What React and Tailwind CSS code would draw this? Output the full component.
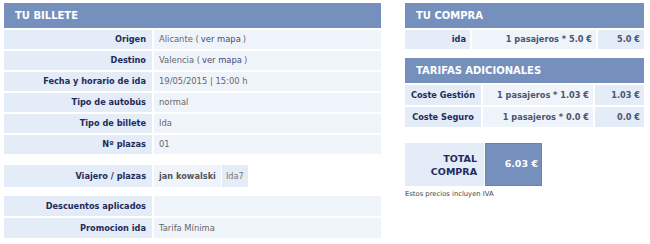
const HEAD = "bg-[#7690bd] text-white font-bold text-[10px] h-[25px] flex items-center pl-[11px]";
const LABEL = "bg-[#e4ecf7] text-[#1f2b5c] font-bold text-[8.2px] flex items-center justify-end pr-[6px]";
const VALUE = "bg-[#eff4fb] text-[#666] text-[8.4px] flex items-center pl-[5px]";

function Row({ label, children, h = "h-[19px]" }) {
  return (
    <div className={`flex gap-[2px] ${h}`}>
      <div className={`${LABEL} w-[148px]`}>{label}</div>
      <div className={`${VALUE} flex-1`}>{children}</div>
    </div>
  );
}

function Mapa({ city }) {
  return (
    <>
      {city}&nbsp;( <span className="text-[#3b4a78] mx-[2px]">ver mapa</span> )
    </>
  );
}

export default function App() {
  return (
    <div
      className="w-[650px] h-[244px] bg-white flex items-start pt-[3px] pl-[4px]"
      style={{ fontFamily: '"DejaVu Sans", Verdana, sans-serif' }}
    >
      {/* tu billete */}
      <div className="w-[377px]">
        <div className={HEAD}>TU BILLETE</div>
        <div className="mt-[2px] flex flex-col gap-[2px]">
          <Row label="Origen"><Mapa city="Alicante" /></Row>
          <Row label="Destino"><Mapa city="Valencia" /></Row>
          <Row label="Fecha y horario de ida">19/05/2015 | 15:00 h</Row>
          <Row label="Tipo de autobús">normal</Row>
          <Row label="Tipo de billete">Ida</Row>
          <Row label="Nº plazas">01</Row>
        </div>

        <div className="mt-[11px] flex gap-[2px] h-[22px]">
          <div className={`${LABEL} w-[148px]`}>Viajero / plazas</div>
          <div className="flex gap-[1px]">
            <div className="bg-[#eff4fb] text-[#555] font-bold text-[8.2px] flex items-center px-[5px]">jan kowalski</div>
            <div className="bg-[#e4ecf7] text-[#777] text-[8.2px] flex items-center px-[4px]">Ida7</div>
          </div>
        </div>

        <div className="mt-[9px] flex flex-col gap-[2px]">
          <Row label="Descuentos aplicados" h="h-[20px]"></Row>
          <Row label="Promocion ida" h="h-[20px]">Tarifa Mínima</Row>
        </div>
      </div>

      {/* derecha */}
      <div className="ml-[24px] w-[239px]">
        <div className={HEAD}>TU COMPRA</div>
        <div className="mt-[2px] flex gap-[2px] h-[19px] text-[8.2px] font-bold">
          <div className="w-[65px] bg-[#e4ecf7] text-[#1f2b5c] flex items-center justify-end pr-[4px]">ida</div>
          <div className="w-[124px] bg-[#eff4fb] text-[#4b5470] flex items-center justify-end pr-[4px]">1 pasajeros * 5.0 €</div>
          <div className="flex-1 bg-[#e4ecf7] text-[#4b5470] flex items-center justify-end pr-[4px]">5.0 €</div>
        </div>

        <div className={`${HEAD} mt-[9px]`}>TARIFAS ADICIONALES</div>
        <div className="mt-[2px] flex flex-col gap-[2px] text-[8.2px] font-bold">
          {[
            ["Coste Gestión", "1 pasajeros * 1.03 €", "1.03 €"],
            ["Coste Seguro", "1 pasajeros * 0.0 €", "0.0 €"],
          ].map(([a, b, c]) => (
            <div key={a} className="flex gap-[2px] h-[20px]">
              <div className="w-[76px] bg-[#e4ecf7] text-[#1f2b5c] flex items-center justify-center">{a}</div>
              <div className="w-[110px] bg-[#eff4fb] text-[#4b5470] flex items-center justify-end pr-[4px]">{b}</div>
              <div className="flex-1 bg-[#e4ecf7] text-[#4b5470] flex items-center justify-end pr-[4px]">{c}</div>
            </div>
          ))}
        </div>

        <div className="mt-[16px] flex gap-[1px] h-[43px]">
          <div className="w-[79px] bg-[#e4ecf7] text-[#1f2b5c] font-bold text-[9.5px] leading-[13px] flex flex-col items-end justify-center pr-[7px]">
            <span>TOTAL</span>
            <span>COMPRA</span>
          </div>
          <div className="w-[57px] bg-[#7690bd] border border-[#6a82ae] text-white font-bold text-[9.5px] flex items-center justify-end pr-[3px]">
            6.03 €
          </div>
        </div>
        <div className="mt-[3px] text-[6.8px] text-[#444]">Estos precios incluyen IVA</div>
      </div>
    </div>
  );
}
